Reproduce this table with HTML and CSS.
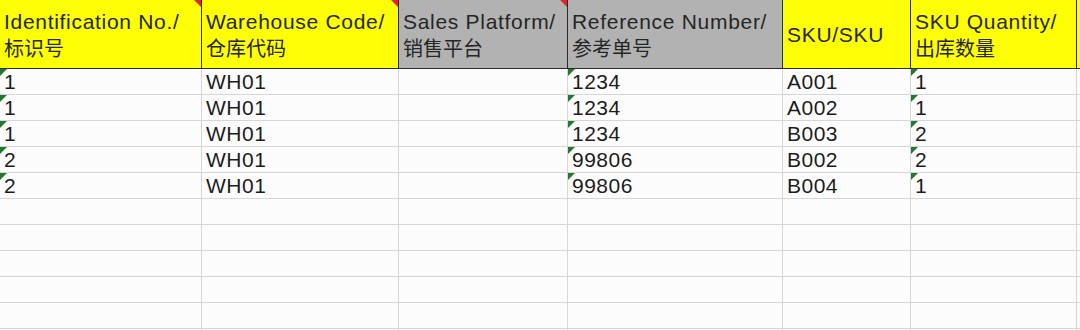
FILE: index.html
```html
<!DOCTYPE html>
<html>
<head>
<meta charset="utf-8">
<link rel="stylesheet" href="styles.css">
</head>
<body>
<div class="sheet">
  <div class="cell head yellow note"><span>Identification No./<br><span class="cn">标识号</span></span></div>
  <div class="cell head yellow note"><span>Warehouse Code/<br><span class="cn">仓库代码</span></span></div>
  <div class="cell head grey note"><span>Sales Platform/<br><span class="cn">销售平台</span></span></div>
  <div class="cell head grey"><span>Reference Number/<br><span class="cn">参考单号</span></span></div>
  <div class="cell head yellow"><span>SKU/SKU</span></div>
  <div class="cell head yellow"><span>SKU Quantity/<br><span class="cn">出库数量</span></span></div>
  <div class="cell head yellow last"></div>

  <div class="cell txt">1</div><div class="cell">WH01</div><div class="cell"></div><div class="cell txt">1234</div><div class="cell">A001</div><div class="cell txt">1</div><div class="cell last"></div>
  <div class="cell txt">1</div><div class="cell">WH01</div><div class="cell"></div><div class="cell txt">1234</div><div class="cell">A002</div><div class="cell txt">1</div><div class="cell last"></div>
  <div class="cell txt">1</div><div class="cell">WH01</div><div class="cell"></div><div class="cell txt">1234</div><div class="cell">B003</div><div class="cell txt">2</div><div class="cell last"></div>
  <div class="cell txt">2</div><div class="cell">WH01</div><div class="cell"></div><div class="cell txt">99806</div><div class="cell">B002</div><div class="cell txt">2</div><div class="cell last"></div>
  <div class="cell txt">2</div><div class="cell">WH01</div><div class="cell"></div><div class="cell txt">99806</div><div class="cell">B004</div><div class="cell txt">1</div><div class="cell last"></div>

  <div class="cell"></div><div class="cell"></div><div class="cell"></div><div class="cell"></div><div class="cell"></div><div class="cell"></div><div class="cell last"></div>
  <div class="cell"></div><div class="cell"></div><div class="cell"></div><div class="cell"></div><div class="cell"></div><div class="cell"></div><div class="cell last"></div>
  <div class="cell"></div><div class="cell"></div><div class="cell"></div><div class="cell"></div><div class="cell"></div><div class="cell"></div><div class="cell last"></div>
  <div class="cell"></div><div class="cell"></div><div class="cell"></div><div class="cell"></div><div class="cell"></div><div class="cell"></div><div class="cell last"></div>
  <div class="cell"></div><div class="cell"></div><div class="cell"></div><div class="cell"></div><div class="cell"></div><div class="cell"></div><div class="cell last"></div>
  <div class="cell"></div><div class="cell"></div><div class="cell"></div><div class="cell"></div><div class="cell"></div><div class="cell"></div><div class="cell last"></div>
</div>
</body>
</html>
```

FILE: styles.css
```css
html, body {
  margin: 0;
  padding: 0;
  background: #fdfcfd;
  overflow: hidden;
}

.sheet {
  display: grid;
  grid-template-columns: 202px 197px 169px 215px 128px 166px 1fr;
  grid-template-rows: 69px;
  grid-auto-rows: 26px;
  width: 1080px;
  height: 330px;
  overflow: hidden;
  font-family: "Liberation Sans", Arial, "Noto Sans CJK SC", sans-serif;
  color: #1c1c1c;
}

.cell {
  position: relative;
  box-sizing: border-box;
  border-right: 1px solid #d6d5d8;
  border-bottom: 1px solid #d6d5d8;
  padding-left: 4px;
  display: flex;
  align-items: center;
  font-size: 21px;
  letter-spacing: 0.5px;
  white-space: nowrap;
  overflow: hidden;
}

.cell.last {
  border-right: none;
}

.head {
  border-right: 1px solid #2b2b2b;
  border-bottom: 1px solid #2b2b2b;
  line-height: 26px;
  letter-spacing: 0.7px;
  color: #262626;
  padding-top: 2px;
}

.head.last {
  border-right: none;
}

.yellow {
  background: #fefe06;
}

.grey {
  background: #b2b2b2;
}

.cn {
  font-family: "Noto Sans CJK SC", sans-serif;
  font-size: 20px;
  letter-spacing: 0;
}

.note::after {
  content: "";
  position: absolute;
  top: 0;
  right: 0;
  border-style: solid;
  border-width: 0 7px 7px 0;
  border-color: transparent #e0262b transparent transparent;
}

.txt::before {
  content: "";
  position: absolute;
  top: 0;
  left: 0;
  border-style: solid;
  border-width: 7px 7px 0 0;
  border-color: #22782d transparent transparent transparent;
}
```
